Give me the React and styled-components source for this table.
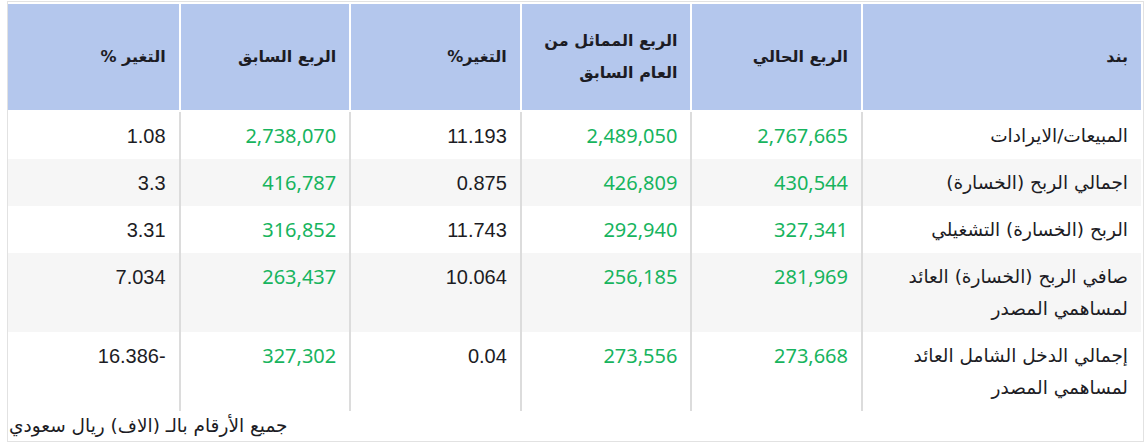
import styled, {createGlobalStyle} from "styled-components";

const GlobalStyle = createGlobalStyle`
    html, body {
        margin: 0;
        padding: 0;
        background: #fff;
    }
    body {
        font-family: "Noto Sans", "DejaVu Sans", sans-serif;
        color: #222;
    }
`;

const Frame = styled.div`
    margin: 1px 4px 0 7px;
    border: 1px solid #e2e2e2;
    padding: 2px 2px 0 0;
`;

const Table = styled.table`
    direction: rtl;
    width: 100%;
    table-layout: fixed;
    border-collapse: separate;
    border-spacing: 0;
    line-height: 32px;
`;

const Head = styled.th`
    width: ${p => p.$wide ? "252px" : "auto"};
    background: #b4c7ed;
    color: #1c1c24;
    font-family: "DejaVu Sans", sans-serif;
    font-size: 16px;
    font-weight: 700;
    text-align: right;
    vertical-align: middle;
    padding: 21px 13px;
    border-left: ${p => p.$last ? "0" : "2px solid #fff"};
    border-bottom: 2px solid #fff;
`;

const Row = styled.tr`
    background: ${p => p.$striped ? "#f6f6f6" : "#fff"};
`;

const fonts = {
    text: `font-family: "DejaVu Sans", sans-serif; font-size: 18.5px;`,
    green: `font-family: "Noto Sans", sans-serif; font-size: 20px;`,
    plain: `font-family: "Liberation Sans", Arial, sans-serif; font-size: 20px;`,
};

const Cell = styled.td`
    text-align: right;
    vertical-align: top;
    padding: 8px 13px 7px;
    border-left: ${p => p.$last ? "0" : "2px solid #dcdcdc"};
    color: ${p => p.$kind === "green" ? "#17b45e" : "#1c1c24"};
    ${p => fonts[p.$kind]}
`;

const Note = styled.div`
    direction: ltr;
    text-align: left;
    font-family: "DejaVu Sans", sans-serif;
    font-size: 18.5px;
    line-height: 30px;
    color: #1c1c24;
    padding-left: 1px;
`;

const headers = ["بند", "الربع الحالي", "الربع المماثل من العام السابق", "التغير%", "الربع السابق", "التغير %"];

const rows = [
    ["المبيعات/الايرادات", "2,767,665", "2,489,050", "11.193", "2,738,070", "1.08"],
    ["اجمالي الربح (الخسارة)", "430,544", "426,809", "0.875", "416,787", "3.3"],
    ["الربح (الخسارة) التشغيلي", "327,341", "292,940", "11.743", "316,852", "3.31"],
    ["صافي الربح (الخسارة) العائد لمساهمي المصدر", "281,969", "256,185", "10.064", "263,437", "7.034"],
    ["إجمالي الدخل الشامل العائد لمساهمي المصدر", "273,668", "273,556", "0.04", "327,302", "-16.386"],
];

const kindOf = i => (i === 0 ? "text" : i === 3 || i === 5 ? "plain" : "green");

export default function App() {
    return (
        <>
            <GlobalStyle/>
            <Frame>
                <Table>
                    <thead>
                    <tr>
                        {headers.map((h, i) => (
                            <Head key={h} $wide={i === 0} $last={i === headers.length - 1}>{h}</Head>
                        ))}
                    </tr>
                    </thead>
                    <tbody>
                    {rows.map((r, ri) => (
                        <Row key={r[0]} $striped={ri % 2 === 1}>
                            {r.map((v, i) => (
                                <Cell key={i} $kind={kindOf(i)} $last={i === r.length - 1}>
                                    {v}
                                </Cell>
                            ))}
                        </Row>
                    ))}
                    </tbody>
                </Table>
                <Note>جميع الأرقام بالـ (الاف) ريال سعودي</Note>
            </Frame>
        </>
    );
}
